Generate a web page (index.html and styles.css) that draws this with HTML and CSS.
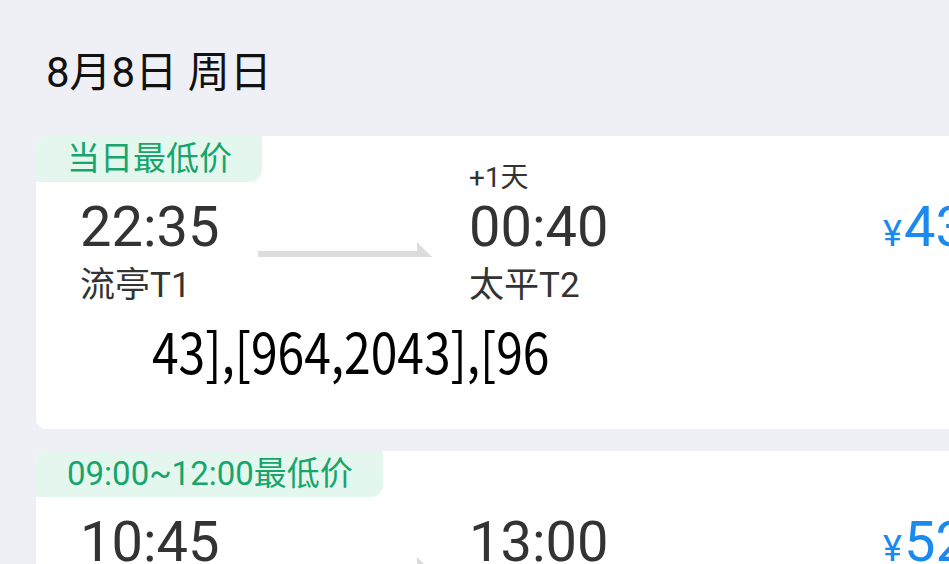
FILE: index.html
```html
<!DOCTYPE html>
<html lang="zh-CN">
<head>
<meta charset="utf-8">
<title>航班列表</title>
<link rel="stylesheet" href="styles.css">
</head>
<body>
<div class="page">
  <div class="date">8月8日 周日</div>

  <div class="card">
    <div class="tag">当日最低价</div>
    <div class="flight">
      <div class="extra dep-extra"></div>
      <div class="time dep-time">22:35</div>
      <div class="arrow">
        <svg width="174" height="16" viewBox="0 0 174 16"><polygon points="0,9 159,9 159,0 174,15 0,15" fill="#dcdcdc"/></svg>
      </div>
      <div class="extra arr-extra">+1天</div>
      <div class="time arr-time">00:40</div>
      <div class="price"><span class="yen">¥</span><span class="num">43</span></div>
      <div class="airport dep-airport">流亭T1</div>
      <div class="airport arr-airport">太平T2</div>
    </div>
    <div class="junk"><span class="junk-text">43],[964,2043],[96</span></div>
  </div>

  <div class="card">
    <div class="tag">09:00~12:00最低价</div>
    <div class="flight">
      <div class="extra dep-extra"></div>
      <div class="time dep-time">10:45</div>
      <div class="arrow">
        <svg width="174" height="16" viewBox="0 0 174 16"><polygon points="0,9 159,9 159,0 174,15 0,15" fill="#dcdcdc"/></svg>
      </div>
      <div class="extra arr-extra"></div>
      <div class="time arr-time">13:00</div>
      <div class="price"><span class="yen">¥</span><span class="num">52</span></div>
      <div class="airport dep-airport">流亭T1</div>
      <div class="airport arr-airport">太平T2</div>
    </div>
  </div>
</div>
</body>
</html>
```
FILE: styles.css
```css
html, body {
  margin: 0;
  padding: 0;
}
body {
  background: #eef0f5;
  font-family: Roboto, "Noto Sans CJK SC", sans-serif;
  color: #333;
}
.page {
  width: 949px;
  height: 564px;
  overflow: hidden;
}
.date {
  padding: 43px 0 0 46px;
  font-size: 42px;
  line-height: 60px;
  color: #111;
  margin-bottom: 33px;
}
.card {
  position: relative;
  margin-left: 36px;
  width: 1000px;
  background: #fff;
  border-radius: 10px;
  overflow: hidden;
  margin-bottom: 22px;
}
.tag {
  position: absolute;
  left: 0;
  top: 0;
  height: 46px;
  line-height: 46px;
  padding: 0 30px 0 31px;
  font-size: 33px;
  color: #17a56c;
  background: #e4f7ef;
  border-bottom-right-radius: 12px;
}
.flight {
  display: grid;
  grid-template-columns: 178px 174px 37px 414px auto;
  grid-template-rows: 32px 66px 46px;
  padding: 26px 0 0 44px;
  height: 144px;
}
.extra {
  font-size: 28px;
  line-height: 32px;
}
.dep-extra { grid-column: 1; grid-row: 1; }
.arr-extra { grid-column: 4; grid-row: 1; }
.time {
  font-size: 56px;
  line-height: 66px;
  grid-row: 2;
  align-self: baseline;
}
.dep-time { grid-column: 1; }
.arr-time { grid-column: 4; }
.arrow {
  grid-column: 2;
  grid-row: 2;
  align-self: start;
  margin-top: 48px;
  height: 16px;
}
.arrow svg { display: block; }
.price {
  grid-column: 5;
  grid-row: 2;
  align-self: baseline;
  color: #1a8af0;
  white-space: nowrap;
}
.yen {
  font-size: 36px;
  line-height: 66px;
  margin-right: 2px;
}
.num {
  font-size: 56px;
  line-height: 66px;
}
.airport {
  grid-row: 3;
  font-size: 35px;
  line-height: 40px;
  padding-top: 6px;
  white-space: nowrap;
}
.dep-airport { grid-column: 1; }
.arr-airport { grid-column: 4; }
.junk {
  margin-top: 14px;
  padding-left: 116px;
  height: 109px;
}
.junk-text {
  display: inline-block;
  font-family: "Noto Sans CJK SC", sans-serif;
  font-size: 56px;
  line-height: 60px;
  color: #000;
  transform: scaleX(0.856);
  transform-origin: left center;
  white-space: nowrap;
}
```
